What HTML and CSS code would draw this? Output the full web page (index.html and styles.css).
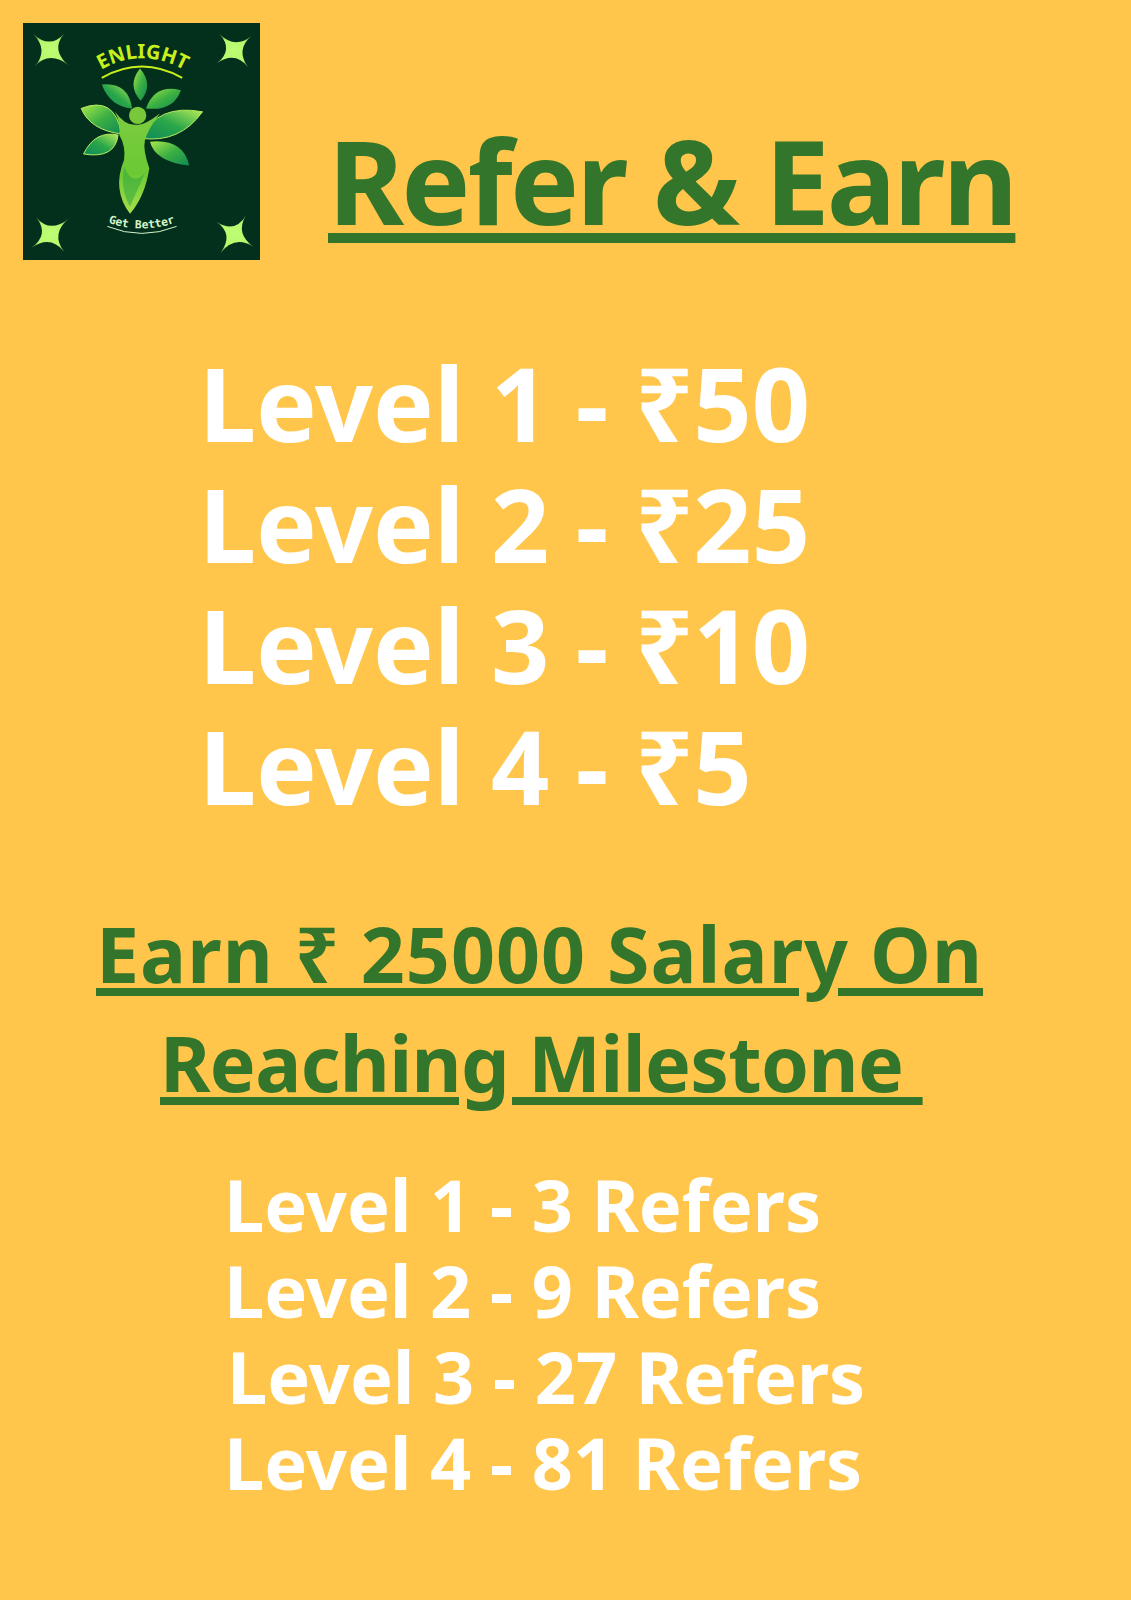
FILE: index.html
```html
<!DOCTYPE html>
<html lang="en">
<head>
<meta charset="utf-8">
<title>Refer &amp; Earn</title>
<link rel="stylesheet" href="styles.css">
</head>
<body>
<main class="poster">
  <header class="top">
    <svg class="logo" viewBox="68 68 713 713" role="img" aria-label="Enlight logo">
      <defs>
        <linearGradient id="leafA" x1="0" y1="0" x2="1" y2="1">
          <stop offset="0" stop-color="#a6e84a"/><stop offset="0.5" stop-color="#3cb043"/><stop offset="1" stop-color="#0f8a52"/>
        </linearGradient>
        <linearGradient id="leafB" x1="1" y1="0" x2="0" y2="1">
          <stop offset="0" stop-color="#b4ec5a"/><stop offset="0.5" stop-color="#2aa648"/><stop offset="1" stop-color="#0d8a5a"/>
        </linearGradient>
        <linearGradient id="bodyG" x1="0" y1="0" x2="0" y2="1">
          <stop offset="0" stop-color="#7ccc40"/><stop offset="0.6" stop-color="#6cc933"/><stop offset="1" stop-color="#a8e04a"/>
        </linearGradient>
        <radialGradient id="starG" cx="0.5" cy="0.5" r="0.72">
          <stop offset="0" stop-color="#bdff74"/><stop offset="0.55" stop-color="#b4f86c"/><stop offset="1" stop-color="#2c6a36"/>
        </radialGradient>
        <path id="arcTop" d="M283 222 Q425 126 574 222"/>
        <path id="arcBot" d="M316 666 Q425 706 534 666"/>
      </defs>
      <rect x="68" y="68" width="713" height="713" fill="#03301c"/>
      <g fill="url(#starG)">
        <path d="M98 100Q148 148 192 100Q150 148 206 196Q148 150 104 198Q146 148 98 100Z"/>
        <path d="M658 100Q706 148 756 106Q706 148 746 202Q706 150 650 190Q704 148 658 100Z"/>
        <path d="M108 653Q150 702 206 656Q150 702 192 756Q150 704 94 744Q148 704 108 653Z"/>
        <path d="M649 666Q706 702 738 648Q706 702 762 742Q706 704 662 760Q704 702 649 666Z"/>
      </g>
      <text class="brand"><textPath href="#arcTop" startOffset="50%" text-anchor="middle">ENLIGHT</textPath></text>
      <path d="M305 233Q425 165 547 233" fill="none" stroke="#c8f01c" stroke-width="6"/>
      <path d="M420 205Q462 255 422 302Q380 255 420 205Z" fill="url(#leafA)"/>
      <path d="M305 253Q385 245 396 325Q330 320 305 253Z" fill="url(#leafB)"/>
      <path d="M543 270Q465 250 438 325Q520 335 543 270Z" fill="url(#leafA)"/>
      <path d="M243 325Q345 285 364 402Q270 390 243 325Z" fill="url(#leafA)" stroke="#b8ec60" stroke-width="3"/>
      <path d="M250 462Q285 390 354 405Q345 478 250 462Z" fill="url(#leafB)" stroke="#b8ec60" stroke-width="3"/>
      <path d="M568 497Q550 415 450 425Q465 485 568 497Z" fill="url(#leafA)"/>
      <path d="M608 335Q470 310 425 415Q540 430 608 335Z" fill="url(#leafB)" stroke="#b8ec60" stroke-width="3"/>
      <circle cx="413" cy="346" r="26" fill="#79c83a"/>
      <path d="M345 335Q375 378 410 374Q430 378 480 340Q445 385 435 420Q428 450 448 505Q435 590 390 642Q335 570 372 480Q378 440 358 405Q362 370 345 335Z" fill="url(#bodyG)"/>
      <path d="M372 500Q395 560 435 520Q405 585 390 620Q360 570 372 500Z" fill="#2fa83f" opacity="0.55"/>
      <text class="motto"><textPath href="#arcBot" startOffset="50%" text-anchor="middle">Get Better</textPath></text>
      <path d="M322 680Q425 722 530 680" fill="none" stroke="#d5f5c8" stroke-width="3"/>
    </svg>
    <h1 class="title"><span class="rule">Refer &amp; Earn</span></h1>
  </header>

  <ul class="rewards">
    <li>Level 1 - ₹50</li>
    <li>Level 2 - ₹25</li>
    <li>Level 3 - ₹10</li>
    <li>Level 4 - ₹5</li>
  </ul>

  <h2 class="salary">
    <span class="salary-one"><span class="rule">Earn ₹ 25000 Salary On</span></span>
    <span class="salary-two"><span class="rule">Reaching Milestone&#160;</span></span>
  </h2>

  <ul class="refers">
    <li>Level 1 - 3 Refers</li>
    <li>Level 2 - 9 Refers</li>
    <li class="nudge">Level 3 - 27 Refers</li>
    <li>Level 4 - 81 Refers</li>
  </ul>
</main>
</body>
</html>
```
FILE: styles.css
```css
* { box-sizing: border-box; }
html, body { margin: 0; padding: 0; }
body { background: #ffc64b; font-family: "Noto Sans", "DejaVu Sans", sans-serif; }
.poster { width: 1131px; height: 1600px; overflow: hidden; background: #ffc64b; padding: 23px 0 0 0; }
.top { display: flex; align-items: flex-start; padding-left: 23px; height: 237px; }
.logo { width: 237px; height: 237px; flex: none; display: block; }
.brand { font: 700 60px "Noto Sans", sans-serif; fill: #c8f01c; }
.motto { font: 700 34px "DejaVu Sans Mono", monospace; fill: #d5f5c8; }
.title { margin: 97px 0 0 68px; font-size: 116px; line-height: 120px; font-weight: 700; letter-spacing: -2.75px; color: #33752a; white-space: pre; }
.rule { text-decoration: underline; text-decoration-thickness: 10px; text-underline-offset: 8px; white-space: pre; }
ul { list-style: none; margin: 0; padding: 0; color: #fff; font-weight: 700; }
li { white-space: pre; }
.rewards { margin-top: 82px; padding-left: 199px; font-size: 102px; line-height: 121px; }
.salary { margin: 73px 0 0; font-size: 77px; line-height: 109px; font-weight: 700; letter-spacing: 1px; color: #33752a; }
.salary-one, .salary-two { display: block; white-space: pre; }
.salary-one { padding-left: 96px; }
.salary-two { padding-left: 160px; letter-spacing: -0.65px; }
.salary .rule { text-decoration-thickness: 8px; text-underline-offset: 5px; }
.refers { margin-top: 44px; padding-left: 224px; font-size: 72px; line-height: 86px; }
.nudge { padding-left: 3px; }
```
